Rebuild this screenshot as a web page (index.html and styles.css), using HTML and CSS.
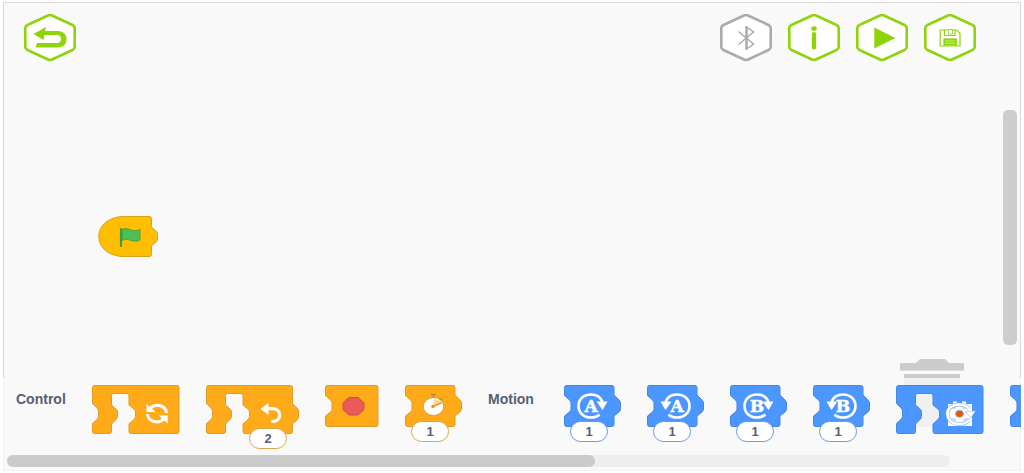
FILE: index.html
```
<!DOCTYPE html>
<html lang="en">

<head>
    <meta charset="UTF-8">
    <meta name="viewport" content="width=device-width, initial-scale=1.0">
    <title>Blocks</title>
    <link rel="stylesheet" href="styles.css">
</head>

<body>
    <!-- shared shapes -->
    <svg class="defs" aria-hidden="true">
        <symbol id="hex" viewBox="0 0 52 48">
            <path d="M24 2 Q26 1 28 2 L48.500 11.500 Q50.700 12.500 50.700 14.500 V33.500 Q50.700 35.500 48.500 36.500 L28 46 Q26 47 24 46 L3.500 36.500 Q1.300 35.500 1.300 33.500 V14.500 Q1.300 12.500 3.500 11.500 Z" fill="#fff" stroke="currentColor" stroke-width="2.600"/>
        </symbol>
        <symbol id="piece" viewBox="0 0 57 42">
            <path d="M2.500 .5 H48 Q50 .5 50 2.500 V10 L55 15 Q56.500 16.500 56.500 18 V24 Q56.500 25.500 55 27 L50 31 V39.500 Q50 41.500 48 41.500 H2.500 Q.5 41.500 .5 39.500 V31 L5.500 27 Q7 25.500 7 24 V18 Q7 16.500 5.500 15 L.5 10.500 V2.500 Q.5 .5 2.500 .5Z"/>
        </symbol>
        <symbol id="loop" viewBox="0 0 88 49">
            <path d="M2.500 .5 H85 Q87 .5 87 2.500 V46.500 Q87 48.500 85 48.500 H39 Q37 48.500 37 46.500 V39 L42 34.500 Q43.500 33 43.500 31.500 V27 Q43.500 25.500 42 24 L37 20 V10.500 Q37 8.500 35 8.500 H21.500 Q19.500 8.500 19.500 10.500 V20 L24 24 Q25.500 25.500 25.500 27 V31.500 Q25.500 33 24 34.500 L19.500 39 V46.500 Q19.500 48.500 17.500 48.500 H2.500 Q.5 48.500 .5 46.500 V38.500 L5 34.500 Q6.500 33 6.500 31.500 V26 Q6.500 24.500 5 23 L.5 18.500 V2.500 Q.5 .5 2.500 .5Z"/>
        </symbol>
        <symbol id="turn" viewBox="0 0 57 42">
            <path d="M38.500 17 C36.500 11.500 32 9.500 27 9.500 C19.500 9.500 14.500 14.500 14.500 21 C14.500 27.500 19.500 32.500 27 32.500 C30.500 32.500 33.500 31.500 35.500 29.500" fill="none" stroke="#fff" stroke-width="2.600"/>
            <path d="M32.500 16.500 H43.500 L38.500 25Z" fill="#fff" stroke="none"/>
        </symbol>
    </svg>

    <main class="app">
        <header class="toolbar">
            <button class="hex-btn" aria-label="Back">
                <svg width="52" height="49" viewBox="0 0 52 48">
                    <use href="#hex"/>
                    <path d="M9.500 20.500 L22 13.500 L21 17.500 H34 C45.500 17.500 45.500 34 34 34 H11.500 L13 29.500 H33 C38.500 29.500 38.500 21.500 33 21.500 H20.500 L19.500 26.500Z" fill="currentColor"/>
                </svg>
            </button>
            <div class="toolbar-group">
                <button class="hex-btn hex-btn-off" aria-label="Connect Bluetooth">
                    <svg width="52" height="49" viewBox="0 0 52 48">
                        <use href="#hex"/>
                        <path d="M18.500 18 L33.500 30.500 L26.500 35.500 V13.500 L33.500 18.500 L18.500 31" fill="none" stroke="currentColor" stroke-width="1.500"/>
                        <path d="M26.500 13 V36" stroke="currentColor" stroke-width="2.400"/>
                    </svg>
                </button>
                <button class="hex-btn" aria-label="Info">
                    <svg width="52" height="49" viewBox="0 0 52 48">
                        <use href="#hex"/>
                        <ellipse cx="26" cy="15" rx="2.700" ry="2.300" fill="currentColor"/>
                        <rect x="23.800" y="18.500" width="4.400" height="17.500" rx="2" fill="currentColor"/>
                    </svg>
                </button>
                <button class="hex-btn" aria-label="Play">
                    <svg width="52" height="49" viewBox="0 0 52 48">
                        <use href="#hex"/>
                        <path d="M18.300 14 L39.500 24.500 L18.300 35Z" fill="currentColor"/>
                    </svg>
                </button>
                <button class="hex-btn" aria-label="Save">
                    <svg width="52" height="49" viewBox="0 0 52 48">
                        <use href="#hex"/>
                        <g fill="none" stroke="currentColor" stroke-width="1.200">
                            <path d="M16.200 16.500 H32.500 L36 20 V32.500 H16.200Z"/>
                            <path d="M20.500 16.500 V22 H31 V16.500"/>
                            <rect x="20" y="25.500" width="12.500" height="6"  fill="currentColor"/>
                        </g>
                        <path d="M24.500 16 H28.500 V20.500 H24.500Z" fill="#fff" stroke="currentColor" stroke-width=".8"/>
                        <path d="M21 27.500 H31.500 M21 29.800 H31.500" stroke="#fff" stroke-width=".5"/>
                    </svg>
                </button>
            </div>
        </header>

        <!-- start block on the canvas -->
        <svg class="start-block" width="61" height="42" viewBox="0 0 61 42">
            <path d="M24 .5 H51.500 Q53.500 .5 53.500 2.500 V11 L58.500 15.500 Q59.500 17 59.500 18 V23 Q59.500 24.500 58.500 25.500 L53.500 30 V38.500 Q53.500 40.500 51.500 40.500 H24 C-7 38.500 -7 2.500 24 .5Z" fill="#ffbf00" stroke="#d9a514"/>
            <path d="M24 13.500 C30 10 34 17.500 42 13.500 V24 C34 28 30 20.500 24 24.500Z" fill="#4cbf56" stroke="#45993d" stroke-width=".8"/>
            <path d="M23 13 V30" stroke="#45993d" stroke-width="2.200" stroke-linecap="round"/>
        </svg>

        <svg class="trash" width="64" height="69" viewBox="0 0 64 69">
            <path d="M0 5 H16 L20 1 H45 L49 5 H64 V12.500 H0Z M4 16 H60 V69 H4Z" fill="#ccc"/>
        </svg>

        <div class="scroll-v"></div>

        <section class="palette">
            <div class="palette-row">
                <h2 class="category">Control</h2>

                <div class="block control">
                    <svg width="88" height="49">
                        <use href="#loop"/>
                        <g fill="none" stroke="#fff" stroke-width="3">
                            <path d="M58 23.500 C64 17.500 74 20.500 74.500 28"/>
                            <path d="M55.500 29 C56 37 67 39.500 72 33.500"/>
                        </g>
                        <path d="M54.500 19 V27 H63.500Z M75.700 38.500 V30.500 H66.700Z" fill="#fff" stroke="none"/>
                    </svg>
                </div>

                <div class="block control">
                    <svg width="93" height="49" viewBox="0 0 93 49">
                        <path d="M2.500 .5 H84.500 Q86.500 .5 86.500 2.500 V18.500 L91 23 Q92.500 24.500 92.500 26 V32 Q92.500 33.500 91 35 L86.500 39 V46.500 Q86.500 48.500 84.500 48.500 H39 Q37 48.500 37 46.500 V39 L42 34.500 Q43.500 33 43.500 31.500 V27 Q43.500 25.500 42 24 L37 20 V10.500 Q37 8.500 35 8.500 H21.500 Q19.500 8.500 19.500 10.500 V20 L24 24 Q25.500 25.500 25.500 27 V31.500 Q25.500 33 24 34.500 L19.500 39 V46.500 Q19.500 48.500 17.500 48.500 H2.500 Q.5 48.500 .5 46.500 V38.500 L5 34.500 Q6.500 33 6.500 31.500 V26 Q6.500 24.500 5 23 L.5 18.500 V2.500 Q.5 .5 2.500 .5Z"/>
                        <path d="M61 23.700 H67 C76 24 76 36.500 66.500 36.500" fill="none" stroke="#fff" stroke-width="3.200" stroke-linecap="round"/>
                        <path d="M54.500 24 L62.500 18 V30Z" fill="#fff" stroke="none"/>
                    </svg>
                    <input class="value value-loop" type="text" value="2" aria-label="Repeat count">
                </div>

                <div class="block control">
                    <svg width="54" height="42" viewBox="0 0 54 42">
                        <path d="M2.500 .5 H51 Q53 .5 53 2.500 V39.500 Q53 41.500 51 41.500 H2.500 Q.5 41.500 .5 39.500 V31 L5.500 27 Q7 25.500 7 24 V18 Q7 16.500 5.500 15 L.5 10.500 V2.500 Q.5 .5 2.500 .5Z"/>
                        <path d="M24 12.500 H33 L39 18 V24.500 L33 30 H24 L18 24.500 V18Z" fill="#ec5959" stroke="#c8504b"/>
                    </svg>
                </div>

                <div class="block control">
                    <svg width="57" height="42">
                        <use href="#piece"/>
                        <path d="M26 9.500 H31 M28.500 9 V13 M35 13.500 L37 15" stroke="#c4892b" stroke-width="1.600"/>
                        <ellipse cx="28.500" cy="21.500" rx="10.300" ry="9" fill="#fff" stroke="#cf9c45"/>
                        <path d="M28.500 21.500 V14 C32 14 35 15.500 36.500 17.500Z" fill="#ffd9a0" stroke="none"/>
                        <path d="M28 21.500 L36.500 17.800" stroke="#e69a1c" stroke-width="1.600"/>
                        <circle cx="28" cy="21.500" r="1.800" fill="#e69a1c" stroke="none"/>
                    </svg>
                    <input class="value" type="text" value="1" aria-label="Wait time">
                </div>

                <h2 class="category">Motion</h2>

                <div class="block motion">
                    <svg width="57" height="42">
                        <use href="#piece"/>
                        <use href="#turn"/>
                        <text class="motor" x="27" y="27">A</text>
                    </svg>
                    <input class="value" type="text" value="1" aria-label="Motor A clockwise turns">
                </div>

                <div class="block motion">
                    <svg width="57" height="42">
                        <use href="#piece"/>
                        <use href="#turn" transform="translate(57 0) scale(-1 1)"/>
                        <text class="motor" x="30" y="27">A</text>
                    </svg>
                    <input class="value" type="text" value="1" aria-label="Motor A counterclockwise turns">
                </div>

                <div class="block motion">
                    <svg width="57" height="42">
                        <use href="#piece"/>
                        <use href="#turn"/>
                        <text class="motor" x="27" y="27">B</text>
                    </svg>
                    <input class="value" type="text" value="1" aria-label="Motor B clockwise turns">
                </div>

                <div class="block motion">
                    <svg width="57" height="42">
                        <use href="#piece"/>
                        <use href="#turn" transform="translate(57 0) scale(-1 1)"/>
                        <text class="motor" x="30" y="27">B</text>
                    </svg>
                    <input class="value" type="text" value="1" aria-label="Motor B counterclockwise turns">
                </div>

                <div class="block motion">
                    <svg width="88" height="49">
                        <use href="#loop"/>
                        <path d="M52 19 H57 V16.500 H61 V18 H66 V16.500 H70 V19 H76 V41 H52Z" fill="#fff" stroke="none"/>
                        <g fill="none" stroke="#8fb5e8" stroke-width=".8">
                            <path d="M54 23 H60 M66 23 H73 M54 34 H59 V38 H68 V34 H74 M57 20 V23 M70 20 V23"/>
                        </g>
                        <path d="M73 24 C69 17 51 18 51.500 29 C52 40 67 42 73 35" fill="none" stroke="#8fb5e8" stroke-width="3.800"/>
                        <path d="M73 24 C69 17 51 18 51.500 29 C52 40 67 42 73 35" fill="none" stroke="#fff" stroke-width="2.600"/>
                        <path d="M69 27 L79.500 26 L75 32.500Z" fill="#fff" stroke="#8fb5e8" stroke-width=".6"/>
                        <ellipse cx="63.500" cy="28.800" rx="4" ry="3.500" fill="#e0561a" stroke="#b3a8a8" stroke-width=".8"/>
                    </svg>
                </div>

                <div class="block motion">
                    <svg width="57" height="42"><use href="#piece"/></svg>
                </div>
            </div>
            <div class="scroll-h">
                <div class="scroll-h-thumb"></div>
            </div>
        </section>
    </main>
</body>

</html>
```

FILE: styles.css
```
* {
    box-sizing: border-box;
}

body {
    margin: 0;
    height: 100vh;
    padding: 2px 3px;
    background: #fff;
    font-family: "Liberation Sans", Arial, sans-serif;
    overflow: hidden;
}

.defs {
    position: absolute;
    width: 0;
    height: 0;
}

.app {
    position: relative;
    height: 100%;
    overflow: hidden;
    background: #f9f9f9;
    box-shadow: inset 0 0 0 1px #d9d9d9;
}

.toolbar {
    display: flex;
    justify-content: space-between;
    padding: 11px 45px 0 21px;
}

.toolbar-group {
    display: flex;
    gap: 16px;
}

.hex-btn {
    padding: 0;
    border: 0;
    background: none;
    color: #8fd40a;
    cursor: pointer;
}

.hex-btn-off {
    color: #ababab;
}

.hex-btn svg {
    display: block;
}

/* canvas items */
.start-block {
    position: absolute;
    left: 95px;
    top: 214px;
}

.trash {
    position: absolute;
    right: 57px;
    bottom: 44px;
}

.scroll-v {
    position: absolute;
    top: 108px;
    right: 4px;
    bottom: 126px;
    width: 14px;
    border-radius: 5px;
    background: #cdcdcd;
}

/* block palette */
.palette {
    position: absolute;
    left: 0;
    right: 0;
    bottom: 0;
    padding: 7px 0 4px;
    background: rgba(249, 249, 249, 0.8);
}

.palette-row {
    display: flex;
    align-items: flex-start;
    gap: 26px;
    min-height: 70px;
    padding-left: 13px;
    overflow: hidden;
}

.category {
    flex: none;
    min-width: 50px;
    margin: 0;
    font-size: 14px;
    line-height: 28px;
    color: #575e75;
}

.block {
    position: relative;
    flex: none;
}

.block svg {
    display: block;
}

.control {
    fill: #ffab19;
    stroke: #e09a26;
}

.motion {
    fill: #4c97ff;
    stroke: #4486e0;
}

.motor {
    fill: #fff;
    stroke: #fff;
    stroke-width: 0.5px;
    font-family: "DejaVu Serif", serif;
    font-size: 17px;
    font-weight: bold;
    text-anchor: middle;
}

.value {
    position: absolute;
    left: 6px;
    top: 36px;
    width: 38px;
    height: 21px;
    padding: 0;
    border: 1px solid;
    border-radius: 11px;
    background: #fff;
    color: #575e75;
    font-family: inherit;
    font-size: 13px;
    font-weight: bold;
    text-align: center;
}

.value-loop {
    left: 43px;
    top: 43px;
}

.control .value {
    border-color: #dba54a;
}

.motion .value {
    border-color: #6a9ce0;
}

.scroll-h {
    height: 12px;
    margin: 0 71px 0 4px;
    border-radius: 6px;
    background: #eee;
}

.scroll-h-thumb {
    width: 62.4%;
    height: 100%;
    border-radius: 6px;
    background: #cbcbcb;
}
```
